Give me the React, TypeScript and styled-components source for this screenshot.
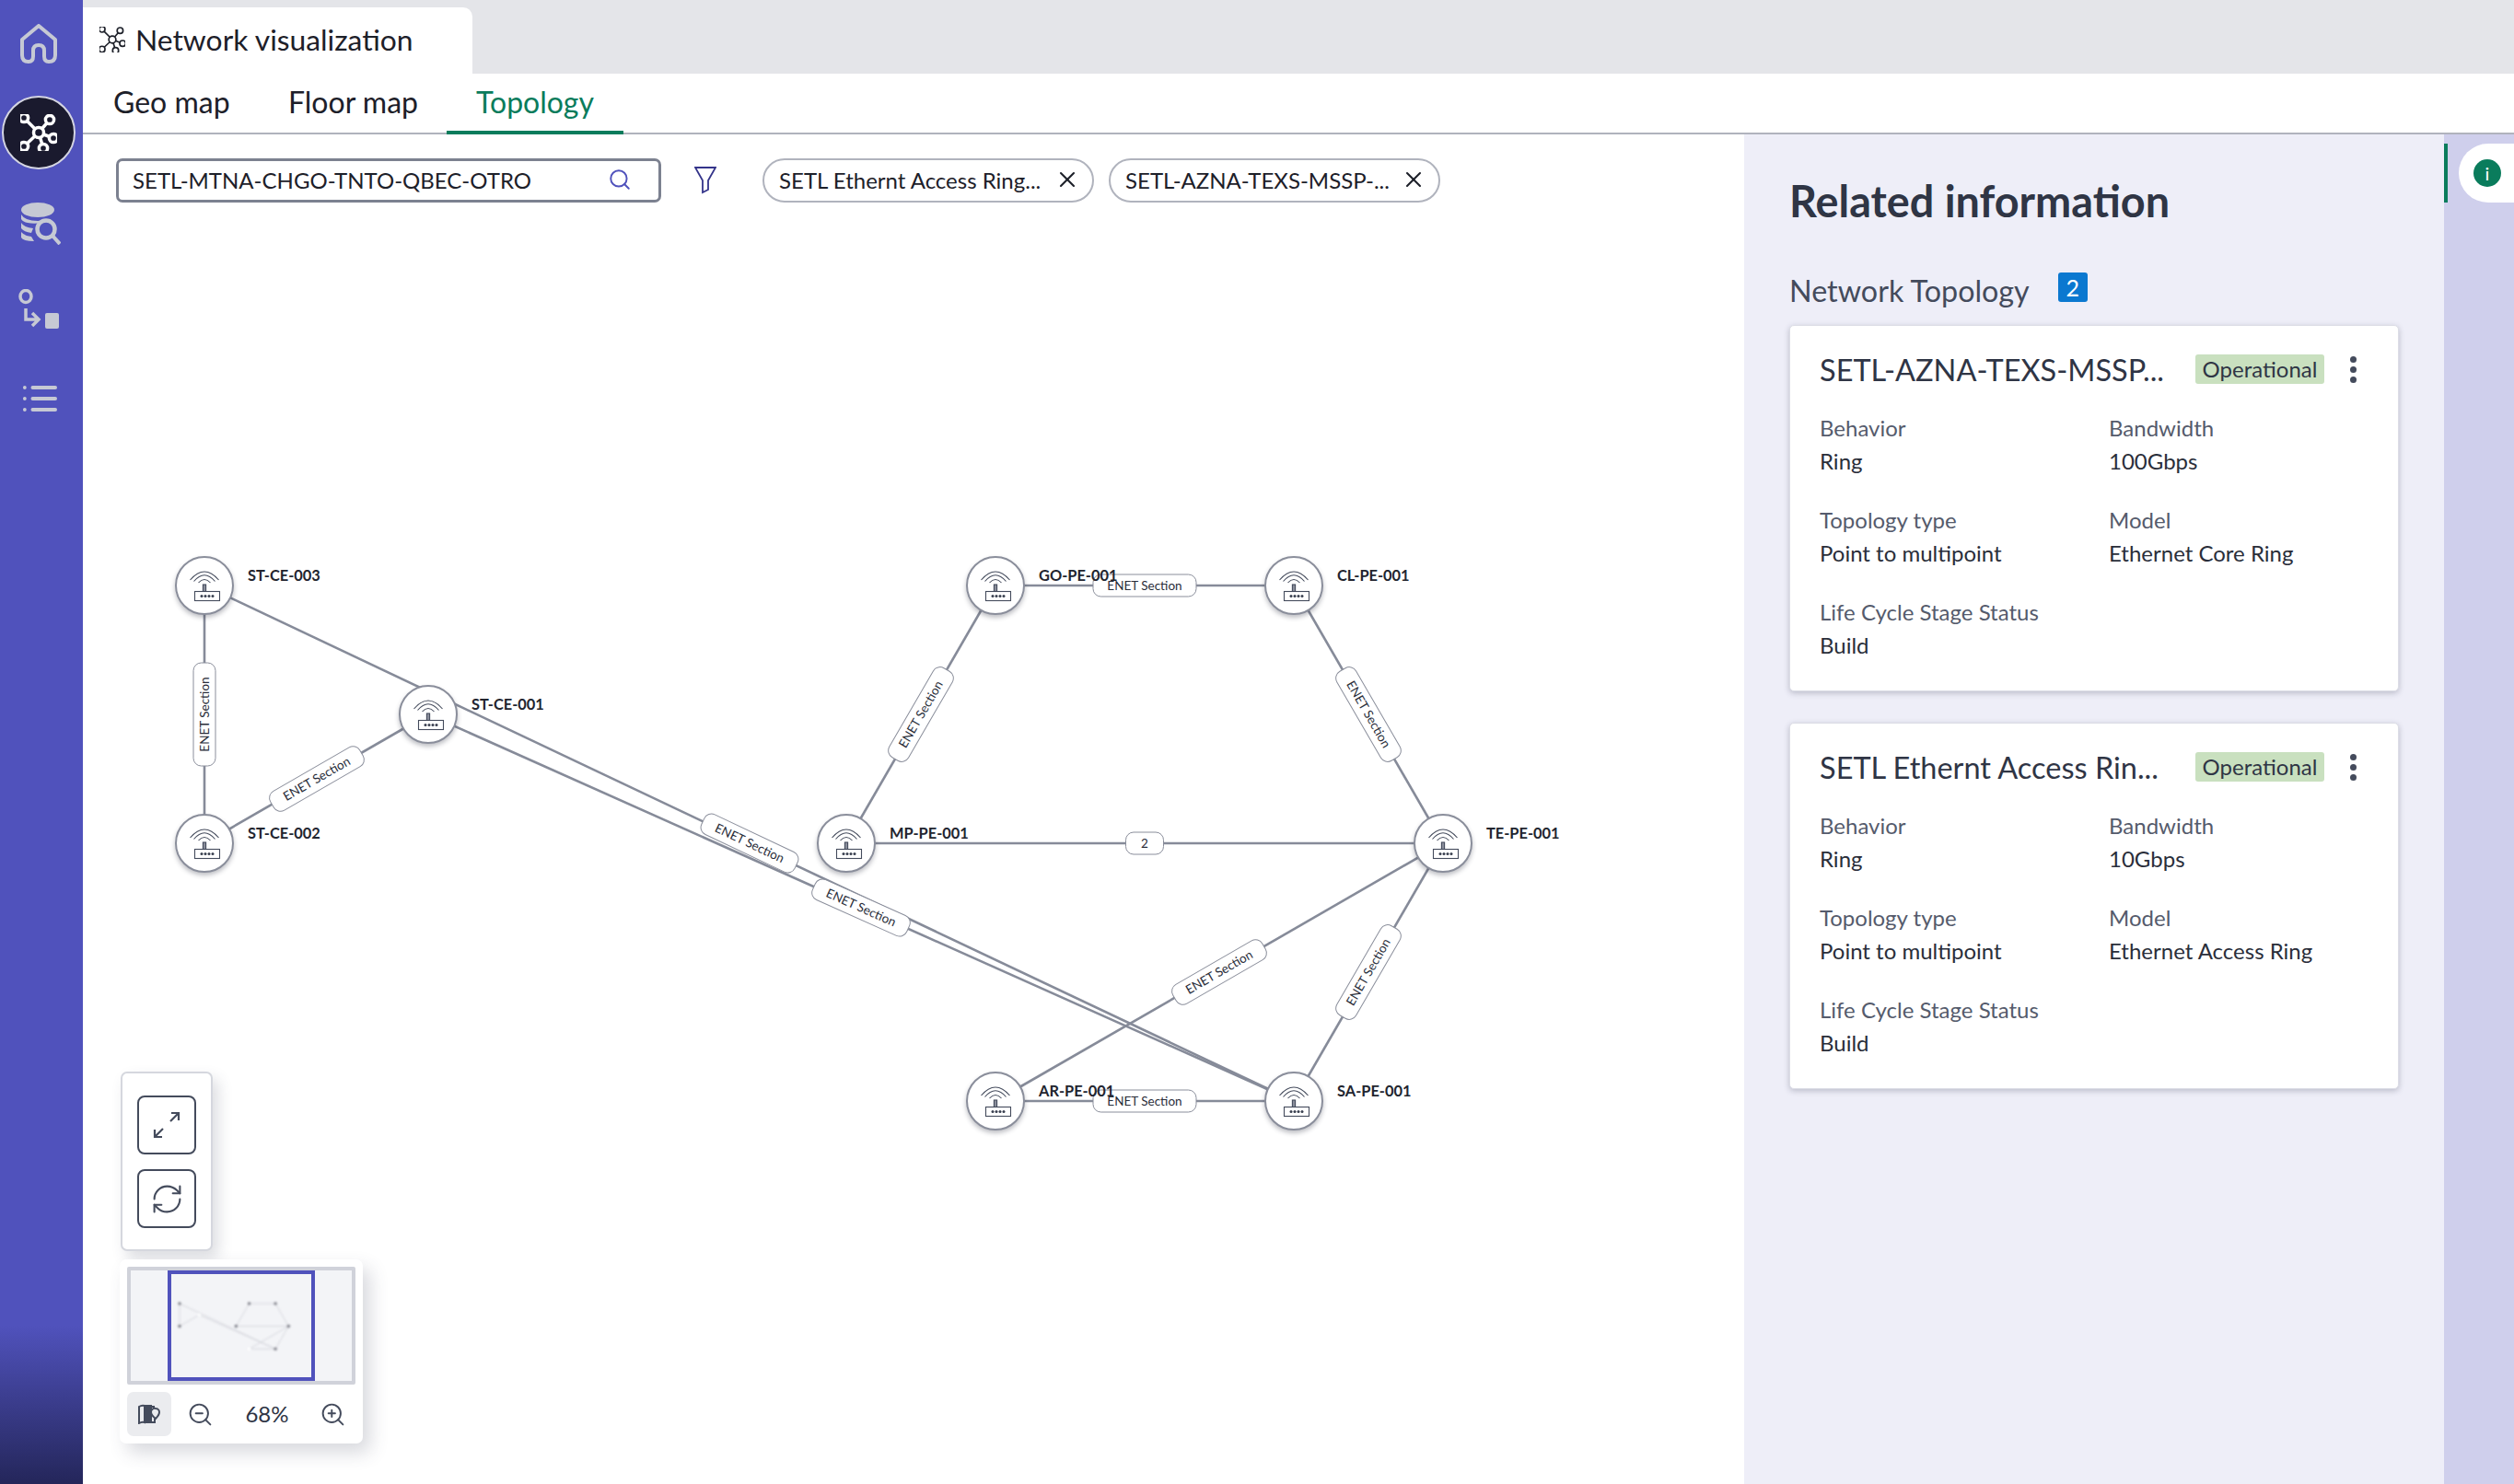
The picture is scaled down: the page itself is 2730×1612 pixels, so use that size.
import styled, {createGlobalStyle} from "styled-components";
import {RefreshCw, Search, X, ZoomIn, ZoomOut} from "lucide-react";

type GraphNode = {
  id: string;
  x: number;
  y: number;
};

type Edge = {
  from: string;
  to: string;
  label: string;
};

const NODES: GraphNode[] = [
  {id: "ST-CE-003", x: 132, y: 416},
  {id: "ST-CE-002", x: 132, y: 696},
  {id: "ST-CE-001", x: 375, y: 556},
  {id: "GO-PE-001", x: 991, y: 416},
  {id: "CL-PE-001", x: 1315, y: 416},
  {id: "MP-PE-001", x: 829, y: 696},
  {id: "TE-PE-001", x: 1477, y: 696},
  {id: "AR-PE-001", x: 991, y: 976},
  {id: "SA-PE-001", x: 1315, y: 976},
];

const ENET = "ENET Section";

const EDGES: Edge[] = [
  {from: "ST-CE-003", to: "ST-CE-002", label: ENET},
  {from: "ST-CE-002", to: "ST-CE-001", label: ENET},
  {from: "ST-CE-003", to: "SA-PE-001", label: ENET},
  {from: "ST-CE-001", to: "SA-PE-001", label: ENET},
  {from: "GO-PE-001", to: "CL-PE-001", label: ENET},
  {from: "MP-PE-001", to: "GO-PE-001", label: ENET},
  {from: "CL-PE-001", to: "TE-PE-001", label: ENET},
  {from: "MP-PE-001", to: "TE-PE-001", label: "2"},
  {from: "AR-PE-001", to: "TE-PE-001", label: ENET},
  {from: "SA-PE-001", to: "TE-PE-001", label: ENET},
  {from: "AR-PE-001", to: "SA-PE-001", label: ENET},
];

const CARDS = [
  {
    title: "SETL-AZNA-TEXS-MSSP...",
    bandwidth: "100Gbps",
    model: "Ethernet Core Ring",
  },
  {
    title: "SETL Ethernt Access Rin...",
    bandwidth: "10Gbps",
    model: "Ethernet Access Ring",
  },
];

const nodeById = (id: string) => NODES.find((n) => n.id === id)!;

const GlobalStyle = createGlobalStyle`
  html, body {
    margin: 0;
    padding: 0;
    height: 100%;
    background: #fff;
    font-family: "Lato", "Open Sans", sans-serif;
    color: #22252f;
  }
  * {
    box-sizing: border-box;
  }
`;

const Page = styled.div`
  display: flex;
  width: 2730px;
  height: 1612px;
  overflow: hidden;
`;

const Sidebar = styled.nav`
  width: 90px;
  flex-shrink: 0;
  display: flex;
  flex-direction: column;
  align-items: center;
  padding: 26px 6px 0 0;
  background: linear-gradient(to bottom, #5052bc 0, #5052bc 1440px, #24265a 1612px);
  color: #c6c9d4;
`;

const NavSlot = styled.div<{ $height: number; $shift?: number }>`
  height: ${(props) => props.$height}px;
  margin-left: ${(props) => props.$shift ?? 0}px;
  display: flex;
  align-items: flex-start;
  justify-content: center;
`;

const ActiveNav = styled.div`
  width: 80px;
  height: 80px;
  flex-shrink: 0;
  border-radius: 50%;
  background: #1a1a2e;
  border: 2px solid #d4d5e2;
  display: flex;
  align-items: center;
  justify-content: center;
`;

const Main = styled.div`
  flex: 1;
  min-width: 0;
  display: flex;
  flex-direction: column;
`;

const TopBar = styled.div`
  height: 80px;
  padding-top: 8px;
  background: #e4e5e9;
  display: flex;
`;

const WindowTab = styled.div`
  width: 423px;
  background: #fff;
  border-top-right-radius: 10px;
  display: flex;
  align-items: center;
  gap: 11px;
  padding: 0 0 2px 18px;
  font-size: 31.8px;
  color: #1d2029;
`;

const TabRow = styled.div`
  height: 66px;
  display: flex;
  border-bottom: 2px solid #b0b3bd;
  padding-left: 33px;
`;

const TabItem = styled.div<{ $active?: boolean; $width: number }>`
  width: ${(props) => props.$width}px;
  height: 66px;
  line-height: 62px;
  font-size: 32px;
  color: ${(props) => (props.$active ? "#0a7c5c" : "#1d2029")};
  text-align: ${(props) => (props.$active ? "center" : "left")};
  border-bottom: ${(props) => (props.$active ? "4px solid #0a7c5c" : "none")};
`;

const Body = styled.div`
  flex: 1;
  min-height: 0;
  display: flex;
`;

const Workspace = styled.div`
  flex: 1;
  min-width: 0;
  display: flex;
  flex-direction: column;
`;

const Toolbar = styled.div`
  height: 74px;
  flex-shrink: 0;
  padding: 26px 0 0 36px;
  display: flex;
  align-items: flex-start;
`;

const SearchBox = styled.div`
  width: 592px;
  height: 48px;
  border: 3px solid #7c8190;
  border-radius: 7px;
  padding: 0 29px 2px 15px;
  display: flex;
  align-items: center;
  justify-content: space-between;
  font-size: 24px;
  color: #1d2029;
`;

const FilterButton = styled.div`
  width: 110px;
  height: 48px;
  display: flex;
  align-items: center;
  padding-left: 36px;
  color: #34348a;
`;

const Chip = styled.div`
  width: 360px;
  height: 48px;
  margin-right: 16px;
  border: 2px solid #b0b3bd;
  border-radius: 24px;
  padding: 0 13px 2px 16px;
  display: flex;
  align-items: center;
  justify-content: space-between;
  font-size: 24px;
  color: #1d2029;
  white-space: nowrap;
`;

const Canvas = styled.div`
  flex: 1;
  position: relative;
  min-height: 0;
`;

const EdgeLayer = styled.svg`
  position: absolute;
  left: 0;
  top: 0;
  width: 100%;
  height: 100%;
`;

const EdgePill = styled.div.attrs<{ $x: number; $y: number; $angle: number }>((props) => ({
  style: {
    left: props.$x,
    top: props.$y,
    transform: `translate(-50%, -50%) rotate(${props.$angle}deg)`,
  },
}))<{ $x: number; $y: number; $angle: number; $short: boolean }>`
  position: absolute;
  width: ${(props) => (props.$short ? 42 : 113)}px;
  height: 25px;
  padding-bottom: 2px;
  background: #fff;
  border: 1.5px solid #8a8e9b;
  border-radius: 9px;
  display: flex;
  align-items: center;
  justify-content: center;
  font-size: 13.5px;
  color: #2a2e3a;
  white-space: nowrap;
`;

const NodeCircle = styled.div.attrs<{ $x: number; $y: number }>((props) => ({
  style: {left: props.$x - 32, top: props.$y - 32},
}))<{ $x: number; $y: number }>`
  position: absolute;
  width: 64px;
  height: 64px;
  border-radius: 50%;
  background: #fff;
  border: 2px solid #8a8e9b;
  box-shadow: 0 3px 5px rgba(40, 44, 60, 0.3);
  display: flex;
  align-items: center;
  justify-content: center;
`;

const NodeLabel = styled.span.attrs<{ $x: number; $y: number }>((props) => ({
  style: {left: props.$x + 47, top: props.$y - 21},
}))<{ $x: number; $y: number }>`
  position: absolute;
  font-size: 16.4px;
  line-height: 20px;
  font-weight: 700;
  color: #22252f;
  white-space: nowrap;
`;

const ControlPanel = styled.div`
  position: absolute;
  left: 41px;
  bottom: 253px;
  width: 100px;
  height: 195px;
  background: #fff;
  border: 2px solid #d5d7de;
  border-radius: 7px;
  box-shadow: 6px 8px 16px rgba(60, 65, 90, 0.18);
  display: flex;
  flex-direction: column;
  align-items: center;
  gap: 16px;
  padding-top: 24px;
`;

const ControlButton = styled.div`
  width: 64px;
  height: 64px;
  border: 2px solid #444b5c;
  border-radius: 8px;
  display: flex;
  align-items: center;
  justify-content: center;
  color: #444b5c;
`;

const MiniPanel = styled.div`
  position: absolute;
  left: 40px;
  bottom: 44px;
  width: 264px;
  height: 200px;
  background: #fff;
  border-radius: 7px;
  box-shadow: 8px 10px 20px rgba(60, 65, 90, 0.2);
  padding: 8px;
`;

const MiniMap = styled.div`
  position: relative;
  height: 128px;
  background: #f3f4f7;
  border: 4px solid #d0d2da;
  border-radius: 2px;
`;

const MiniDrawing = styled.svg`
  display: block;
  width: 100%;
  height: 100%;
  filter: blur(0.8px);
`;

const MiniViewport = styled.div`
  position: absolute;
  left: 40px;
  top: 0;
  width: 160px;
  height: 100%;
  border: 4px solid #5052bc;
`;

const MiniActions = styled.div`
  display: grid;
  grid-template-columns: 48px 62px 84px 58px;
  align-items: center;
  justify-items: center;
  margin-top: 8px;
  height: 48px;
  color: #444b5c;
`;

const MapToggle = styled.div`
  width: 48px;
  height: 48px;
  border-radius: 7px;
  background: #ebecef;
  display: flex;
  align-items: center;
  justify-content: center;
`;

const ZoomValue = styled.div`
  font-size: 24px;
  padding-bottom: 2px;
  color: #2f3545;
`;

const Related = styled.aside`
  width: 760px;
  flex-shrink: 0;
  background: #eeeef8;
  padding: 44px 49px 0;
`;

const RelatedTitle = styled.h2`
  margin: 0;
  font-size: 46.8px;
  line-height: 56px;
  font-weight: 700;
  color: #2f3545;
`;

const SectionHead = styled.div`
  margin-top: 49px;
  height: 40px;
  display: flex;
  align-items: center;
  gap: 31px;
  font-size: 32.3px;
  color: #444b5c;
`;

const CountBadge = styled.span`
  width: 32px;
  height: 32px;
  margin-top: -6px;
  border-radius: 3px;
  background: #0b78d0;
  color: #fff;
  font-size: 25px;
  display: flex;
  align-items: center;
  justify-content: center;
`;

const CardList = styled.div`
  margin-top: 18px;
  display: flex;
  flex-direction: column;
  gap: 34px;
`;

const Card = styled.article`
  width: 662px;
  height: 398px;
  background: #fff;
  border: 1px solid #dcdde6;
  border-radius: 5px;
  box-shadow: 0 2px 6px rgba(50, 55, 80, 0.28);
  padding: 31px 32px 0;
`;

const CardHead = styled.div`
  height: 32px;
  display: flex;
  align-items: center;
`;

const CardTitle = styled.div`
  width: 408px;
  font-size: 32.5px;
  color: #2f3545;
  white-space: nowrap;
`;

const StatusBadge = styled.span`
  width: 140px;
  height: 32px;
  padding-bottom: 2px;
  border-radius: 3px;
  background: #c9e0bf;
  color: #2f3545;
  font-size: 24px;
  display: flex;
  align-items: center;
  justify-content: center;
`;

const MoreDots = styled.div`
  margin-left: 28px;
  display: flex;
  flex-direction: column;
  gap: 4px;
`;

const Dot = styled.i`
  width: 7px;
  height: 7px;
  border-radius: 50%;
  background: #444b5c;
`;

const FieldGrid = styled.dl`
  margin: 30px 0 0;
  display: grid;
  grid-template-columns: 314px 1fr;
  row-gap: 28px;
`;

const Field = styled.div`
  font-size: 24px;
  line-height: 36px;
`;

const FieldLabel = styled.dt`
  color: #555b6c;
`;

const FieldValue = styled.dd`
  margin: 0;
  color: #2a2e3a;
`;

const Rail = styled.div`
  width: 76px;
  flex-shrink: 0;
  background: #cfcfec;
  padding-top: 10px;
`;

const RailMarker = styled.div`
  height: 64px;
  border-left: 4px solid #0a7c5c;
  padding-left: 12px;
`;

const RailTab = styled.div`
  width: 60px;
  height: 64px;
  background: #fff;
  border-radius: 32px 0 0 32px;
  display: flex;
  align-items: center;
  padding-left: 16px;
`;

const InfoDot = styled.span`
  width: 30px;
  height: 30px;
  border-radius: 50%;
  background: #0a7c5c;
  color: #fff;
  font-size: 20px;
  line-height: 30px;
  text-align: center;
`;

function NetworkIcon({size, color, stroke}: { size: number; color: string; stroke: number }) {
  const ends = [
    [4, 4],
    [32, 6],
    [36, 26],
    [25, 37],
    [4, 35],
  ];
  return (
      <svg width={size} height={size} viewBox="0 0 40 40" fill="none" stroke={color} strokeWidth={stroke}>
        {ends.map(([x, y]) => <line key={x * y} x1={20} y1={20} x2={x} y2={y}/>)}
        {ends.map(([x, y]) => <circle key={x * y} cx={x} cy={y} r={4.6} fill={color === "#fff" ? "#1a1a2e" : "#fff"}/>)}
        <circle cx={20} cy={20} r={5.5} fill={color === "#fff" ? "#1a1a2e" : "#fff"}/>
      </svg>
  );
}

function HomeIcon() {
  return (
      <svg width="44" height="44" viewBox="0 0 44 44" fill="none" stroke="currentColor" strokeWidth="4" strokeLinejoin="round">
        <path d="M4 17 L22 2 L40 17 V34 Q40 41 33 41 Q28 41 28 35 V29 Q28 23 22 23 Q16 23 16 29 V35 Q16 41 11 41 Q4 41 4 34 Z"/>
      </svg>
  );
}

function DataSearchIcon() {
  return (
      <svg width="44" height="46" viewBox="0 0 44 46" fill="currentColor">
        <ellipse cx="19" cy="8" rx="18" ry="8"/>
        <path d="M1 13 Q5 20 19 20 L33 18 V20 Q18 24 8 22 Q3 21 1 18 Z"/>
        <path d="M1 22 Q4 27 14 28 L12 33 Q4 32 1 28 Z"/>
        <path d="M1 32 Q4 36 12 37 L15 42 Q3 42 1 38 Z"/>
        <circle cx="28" cy="29" r="9.5" fill="none" stroke="currentColor" strokeWidth="4.5"/>
        <line x1="35" y1="36" x2="43" y2="45" stroke="currentColor" strokeWidth="4"/>
      </svg>
  );
}

function FlowIcon() {
  return (
      <svg width="46" height="44" viewBox="0 0 46 44" fill="none" stroke="currentColor" strokeWidth="3.5">
        <ellipse cx="8" cy="8" rx="6" ry="6.5"/>
        <path d="M8 21 V33 H21 M15 26 L22 33 L15 40"/>
        <rect x="29" y="26" width="15" height="17" rx="2" fill="currentColor" stroke="none"/>
      </svg>
  );
}

function ListIcon() {
  return (
      <svg width="38" height="30" viewBox="0 0 40 30" preserveAspectRatio="none" fill="currentColor">
        <circle cx="3" cy="3" r="2"/>
        <circle cx="3" cy="15" r="2"/>
        <circle cx="3" cy="27" r="2"/>
        <rect x="10" y="1" width="30" height="4" rx="2"/>
        <rect x="10" y="13" width="30" height="4" rx="2"/>
        <rect x="10" y="25" width="30" height="4" rx="2"/>
      </svg>
  );
}

function FunnelIcon() {
  return (
      <svg width="24" height="30" viewBox="0 0 24 30" fill="none" stroke="currentColor" strokeWidth="1.8">
        <path d="M1 1 H23 L15 15 V25 L9 28 V15 Z"/>
      </svg>
  );
}

function ExpandIcon() {
  return (
      <svg width="30" height="30" viewBox="0 0 30 30" fill="none" stroke="currentColor" strokeWidth="2.2">
        <path d="M19 11 L28 2 M20 2 H28 V10"/>
        <path d="M11 19 L2 28 M2 20 V28 H10"/>
      </svg>
  );
}

function MapIcon() {
  return (
      <svg width="26" height="22" viewBox="0 0 26 22" fill="none" stroke="currentColor" strokeWidth="2">
        <path d="M2 3 Q5 1 8 2 V20 Q5 19 2 21 Z"/>
        <path d="M8 2 H15 V20 H8 Z" fill="currentColor"/>
        <path d="M15 3 H19"/>
        <path d="M20 5 a4 4 0 0 1 4 4 q0 3 -4 7 q-5 -4 -5 -7 a4 4 0 0 1 5 -4 z"/>
        <path d="M15 20 H19 V16"/>
      </svg>
  );
}

function RouterIcon() {
  return (
      <svg width="60" height="60" viewBox="-30 -30 60 60" fill="none" stroke="#444b5c" strokeWidth="1.1">
        <path d="M-15.5 -6 Q0 -24 15.5 -6"/>
        <path d="M-11.5 -4.5 Q0 -18 11.5 -4.5"/>
        <path d="M-6.5 -3 Q0 -10 6.5 -3"/>
        <rect x="-1.6" y="-1" width="3.2" height="8" fill="#8a8e9b"/>
        <rect x="-10.5" y="6.5" width="27" height="10" fill="#fff"/>
        {[-3, 1, 5, 9].map((x) => <circle key={x} cx={x} cy={11.5} r={1.5} fill="#3a4050" stroke="none"/>)}
      </svg>
  );
}

const Graph = () => (
    <>
      <EdgeLayer>
        {EDGES.map((edge) => {
          const a = nodeById(edge.from);
          const b = nodeById(edge.to);
          return (
              <line key={edge.from + edge.to} x1={a.x} y1={a.y} x2={b.x} y2={b.y} stroke="#868b99" strokeWidth="2.6"/>
          );
        })}
      </EdgeLayer>
      {EDGES.map((edge) => {
        const a = nodeById(edge.from);
        const b = nodeById(edge.to);
        const angle = (Math.atan2(b.y - a.y, b.x - a.x) * 180) / Math.PI;
        return (
            <EdgePill
                key={edge.from + edge.to}
                $x={(a.x + b.x) / 2}
                $y={(a.y + b.y) / 2}
                $angle={edge.label === "2" ? 0 : angle === 90 ? -90 : angle}
                $short={edge.label === "2"}
            >
              {edge.label}
            </EdgePill>
        );
      })}
      {NODES.map((node) => (
          <NodeCircle key={node.id} $x={node.x} $y={node.y}>
            <RouterIcon/>
          </NodeCircle>
      ))}
      {NODES.map((node) => (
          <NodeLabel key={node.id} $x={node.x} $y={node.y}>{node.id}</NodeLabel>
      ))}
    </>
);

function App() {
  return (
      <Page>
        <GlobalStyle/>
        <Sidebar>
          <NavSlot $height={78}><HomeIcon/></NavSlot>
          <NavSlot $height={116}><ActiveNav><NetworkIcon size={40} color="#fff" stroke={3.5}/></ActiveNav></NavSlot>
          <NavSlot $height={94} $shift={3}><DataSearchIcon/></NavSlot>
          <NavSlot $height={104} $shift={1}><FlowIcon/></NavSlot>
          <NavSlot $height={40} $shift={1}><ListIcon/></NavSlot>
        </Sidebar>
        <Main>
          <TopBar>
            <WindowTab>
              <NetworkIcon size={28} color="#1d2029" stroke={2.4}/>
              Network visualization
            </WindowTab>
          </TopBar>
          <TabRow>
            <TabItem $width={190}>Geo map</TabItem>
            <TabItem $width={172}>Floor map</TabItem>
            <TabItem $width={192} $active>Topology</TabItem>
          </TabRow>
          <Body>
            <Workspace>
              <Toolbar>
                <SearchBox>
                  SETL-MTNA-CHGO-TNTO-QBEC-OTRO
                  <Search size={26} color="#5052bc" strokeWidth={1.8}/>
                </SearchBox>
                <FilterButton><FunnelIcon/></FilterButton>
                <Chip>SETL Ethernt Access Ring... <X size={28} color="#1d2029" strokeWidth={1.8}/></Chip>
                <Chip>SETL-AZNA-TEXS-MSSP-... <X size={28} color="#1d2029" strokeWidth={1.8}/></Chip>
              </Toolbar>
              <Canvas>
                <Graph/>
                <ControlPanel>
                  <ControlButton><ExpandIcon/></ControlButton>
                  <ControlButton><RefreshCw size={37} strokeWidth={1.35}/></ControlButton>
                </ControlPanel>
                <MiniPanel>
                  <MiniMap>
                    <MiniDrawing viewBox="-470 7 2727 1364" preserveAspectRatio="none">
                      {EDGES.map((edge) => {
                        const a = nodeById(edge.from);
                        const b = nodeById(edge.to);
                        return <line key={edge.from + edge.to} x1={a.x} y1={a.y} x2={b.x} y2={b.y} stroke="#d6d7dd" strokeWidth="11"/>;
                      })}
                      {NODES.map((node) => (
                          <circle key={node.id} cx={node.x} cy={node.y} r={20}
                                  fill={node.id === "ST-CE-001" || node.id === "AR-PE-001" ? "#fff" : "#85868f"}/>
                      ))}
                    </MiniDrawing>
                    <MiniViewport/>
                  </MiniMap>
                  <MiniActions>
                    <MapToggle><MapIcon/></MapToggle>
                    <ZoomOut size={29} strokeWidth={1.6}/>
                    <ZoomValue>68%</ZoomValue>
                    <ZoomIn size={29} strokeWidth={1.6}/>
                  </MiniActions>
                </MiniPanel>
              </Canvas>
            </Workspace>
            <Related>
              <RelatedTitle>Related information</RelatedTitle>
              <SectionHead>
                Network Topology
                <CountBadge>2</CountBadge>
              </SectionHead>
              <CardList>
                {CARDS.map((card) => (
                    <Card key={card.title}>
                      <CardHead>
                        <CardTitle>{card.title}</CardTitle>
                        <StatusBadge>Operational</StatusBadge>
                        <MoreDots><Dot/><Dot/><Dot/></MoreDots>
                      </CardHead>
                      <FieldGrid>
                        <Field><FieldLabel>Behavior</FieldLabel><FieldValue>Ring</FieldValue></Field>
                        <Field><FieldLabel>Bandwidth</FieldLabel><FieldValue>{card.bandwidth}</FieldValue></Field>
                        <Field><FieldLabel>Topology type</FieldLabel><FieldValue>Point to multipoint</FieldValue></Field>
                        <Field><FieldLabel>Model</FieldLabel><FieldValue>{card.model}</FieldValue></Field>
                        <Field><FieldLabel>Life Cycle Stage Status</FieldLabel><FieldValue>Build</FieldValue></Field>
                      </FieldGrid>
                    </Card>
                ))}
              </CardList>
            </Related>
            <Rail>
              <RailMarker>
                <RailTab><InfoDot>i</InfoDot></RailTab>
              </RailMarker>
            </Rail>
          </Body>
        </Main>
      </Page>
  );
}

export default App;
